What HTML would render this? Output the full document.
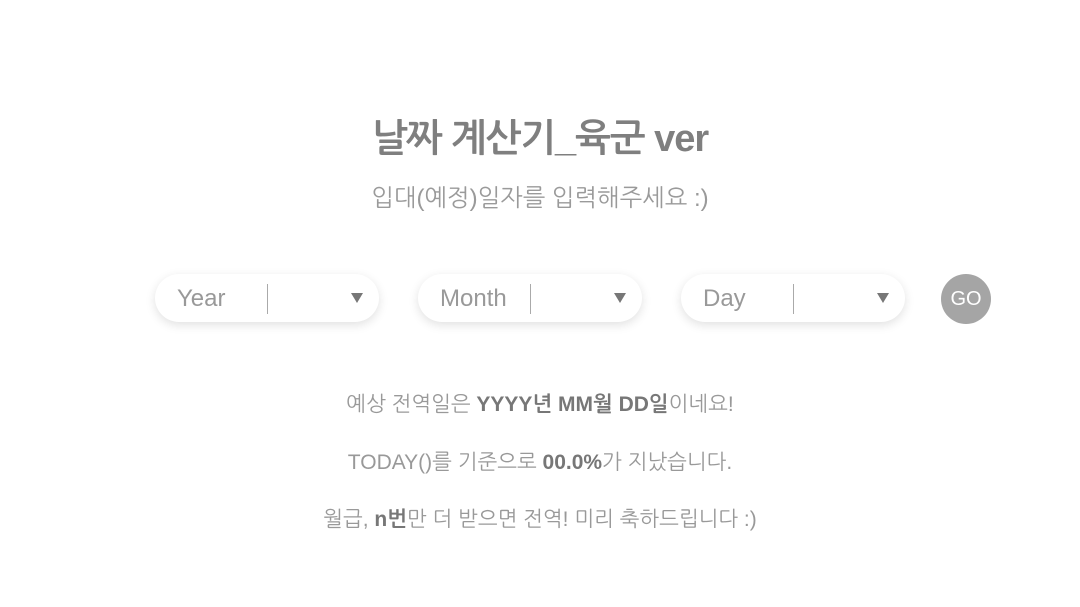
<!DOCTYPE html>
<html><head><meta charset="utf-8"><style>
body{margin:0;width:1080px;height:607px;background:#fff;font-family:"Liberation Sans","NanumGothic","Noto Sans CJK KR",sans-serif;color:#888;position:relative;overflow:hidden}
.t{position:absolute;left:0;width:1080px;text-align:center;white-space:nowrap}
h1{position:absolute;left:0;width:1080px;text-align:center;top:118px;margin:0;font-size:38px;font-weight:bold;color:#7f7f7f;letter-spacing:-1px}
.sel{position:absolute;top:274px;width:224px;height:48px;border-radius:24px;background:#fff;box-shadow:0 3px 10px rgba(0,0,0,0.12)}
.sel span{position:absolute;left:22px;top:11px;font-size:24px;color:#999;font-weight:300}
.sel i{position:absolute;left:112px;top:10px;width:1px;height:30px;background:#aaa}
.sel b{position:absolute;right:16px;top:19px;width:0;height:0;border-left:6px solid transparent;border-right:6px solid transparent;border-top:10px solid #777}
.go{position:absolute;left:941px;top:274px;width:50px;height:50px;border-radius:50%;background:#a5a5a5;color:#fff;font-size:20px;text-align:center;line-height:50px}
.s{font-size:21px;color:#999}
strong{color:#777}
</style></head><body>
<h1>날짜 계산기_육군 ver</h1>
<div class="t" style="top:183px;font-size:24px;color:#9a9a9a">입대(예정)일자를 입력해주세요 :)</div>
<div class="sel" style="left:155px"><span>Year</span><i></i><b></b></div>
<div class="sel" style="left:418px"><span>Month</span><i></i><b></b></div>
<div class="sel" style="left:681px"><span>Day</span><i></i><b></b></div>
<div class="go">GO</div>
<div class="t s" style="top:392px">예상 전역일은 <strong>YYYY년 MM월 DD일</strong>이네요!</div>
<div class="t s" style="top:450px">TODAY()를 기준으로 <strong>00.0%</strong>가 지났습니다.</div>
<div class="t s" style="top:507px">월급, <strong>n번</strong>만 더 받으면 전역! 미리 축하드립니다 :)</div>
</body></html>
